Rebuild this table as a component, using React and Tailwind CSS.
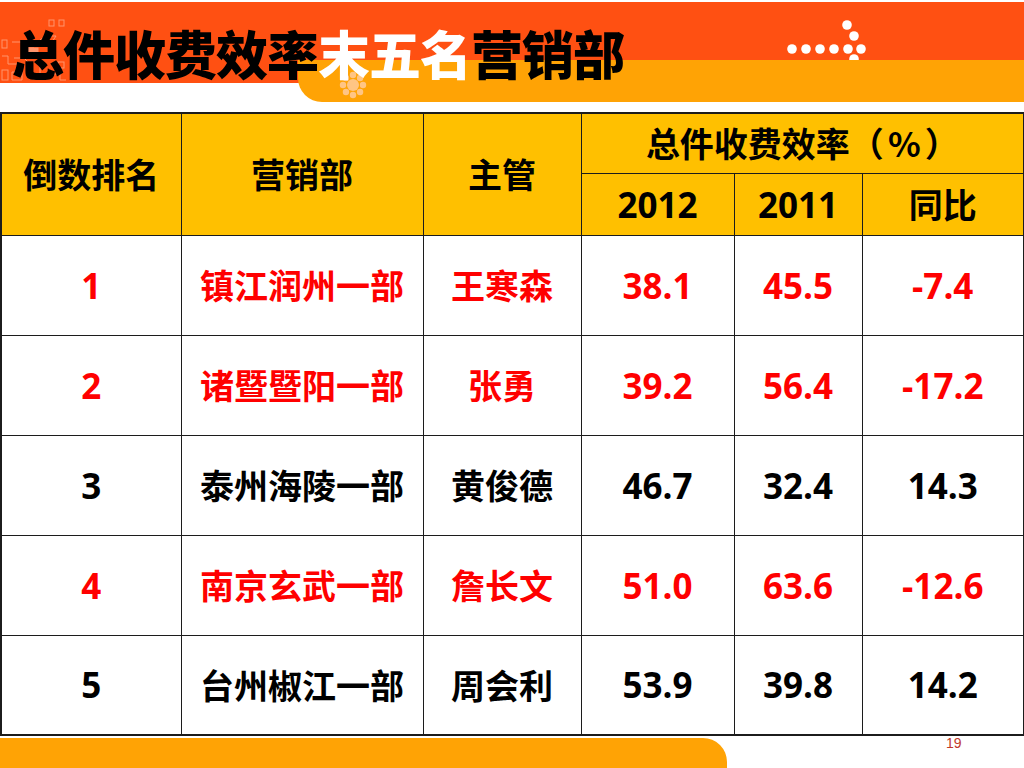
import React from 'react';

const rows = [
  { rank: '1', dept: '镇江润州一部', boss: '王寒森', y12: '38.1', y11: '45.5', diff: '-7.4', red: true },
  { rank: '2', dept: '诸暨暨阳一部', boss: '张勇', y12: '39.2', y11: '56.4', diff: '-17.2', red: true },
  { rank: '3', dept: '泰州海陵一部', boss: '黄俊德', y12: '46.7', y11: '32.4', diff: '14.3', red: false },
  { rank: '4', dept: '南京玄武一部', boss: '詹长文', y12: '51.0', y11: '63.6', diff: '-12.6', red: true },
  { rank: '5', dept: '台州椒江一部', boss: '周会利', y12: '53.9', y11: '39.8', diff: '14.2', red: false },
];

const cjk = "font-['Noto_Sans_CJK_SC',sans-serif] font-bold text-[34px]";
const num = "font-['Open_Sans','Noto_Sans_CJK_SC',sans-serif] font-bold text-[35px]";
const cell = 'border border-[#1c1c1c] text-center align-middle leading-none';

function Circuit() {
  // faint pixel/circuit pattern left of the title
  return (
    <svg className="absolute left-0 top-[18px]" width="70" height="66" viewBox="0 0 70 66" fill="none" stroke="#ffc2a8" strokeWidth="1" opacity="0.6">
      <rect x="49" y="2" width="5" height="6" />
      <rect x="59" y="2" width="5" height="6" />
      <rect x="2" y="22" width="5" height="8" />
      <path d="M12 24 h14 v6 h8" />
      <rect x="28" y="30" width="10" height="4" fill="#ffc2a8" />
      <path d="M40 22 l6 -4 h10 l-4 6" />
      <path d="M2 38 h6 v8 h10" />
      <path d="M14 40 h10 l6 6" />
      <rect x="2" y="52" width="6" height="10" />
      <path d="M12 54 h10 v8 h-10 z" />
      <path d="M26 58 h8 v4" />
      <path d="M40 48 v10 h8 v-6" />
      <path d="M52 56 h8 v6 h6" />
      <rect x="58" y="44" width="6" height="6" />
    </svg>
  );
}

function Flower() {
  const petals = [0, 1, 2, 3, 4, 5, 6, 7];
  return (
    <svg className="absolute left-[338px] top-[70px]" width="30" height="30" viewBox="0 0 30 30">
      <circle cx="15" cy="15" r="6" fill="#ffc585" />
      {petals.map((p) => {
        const a = (p * Math.PI) / 4;
        return <circle key={p} cx={15 + Math.cos(a) * 10} cy={15 + Math.sin(a) * 10} r="3.2" fill="#ffc585" />;
      })}
    </svg>
  );
}

function Dots() {
  const row = [792, 806, 820, 834, 848, 861];
  return (
    <svg className="absolute left-[780px] top-[18px]" width="90" height="42" viewBox="780 18 90 42">
      {row.map((x) => (
        <circle key={x} cx={x} cy="49" r="4.8" fill="#fff" />
      ))}
      <circle cx="847" cy="25" r="4.8" fill="#fff" />
      <circle cx="854" cy="36" r="4.8" fill="#fff" />
      <circle cx="854" cy="59" r="4.8" fill="#fff" />
    </svg>
  );
}

export default function App() {
  return (
    <div className="w-[1024px] h-[768px] bg-white overflow-hidden flex flex-col">
      {/* title banner */}
      <div className="relative h-[112px] shrink-0 pt-[2px]">
        <div className="h-[81px] bg-[#ff5012] pl-[12px] pt-[25px]">
          <h1 className="relative z-10 text-[52px] leading-none font-black tracking-[-1px] font-['Noto_Sans_CJK_SC',sans-serif] whitespace-nowrap">
            <span className="text-black">总件收费效率</span>
            <span className="text-white">末五名</span>
            <span className="text-black">营销部</span>
          </h1>
        </div>
        <Circuit />
        <Dots />
        <div className="absolute left-[298px] right-0 top-[60px] h-[42px] bg-[#ffa305] rounded-bl-[24px]" />
        <Flower />
      </div>

      {/* table */}
      <table className="table-fixed border-collapse w-[1023px] border-2 border-[#1c1c1c]">
        <colgroup>
          <col className="w-[180px]" />
          <col className="w-[242px]" />
          <col className="w-[158px]" />
          <col className="w-[153px]" />
          <col className="w-[128px]" />
          <col className="w-[162px]" />
        </colgroup>
        <thead className="bg-[#ffc000] text-black">
          <tr className="h-[60px]">
            <th rowSpan={2} className={`${cell} ${cjk}`}>倒数排名</th>
            <th rowSpan={2} className={`${cell} ${cjk}`}>营销部</th>
            <th rowSpan={2} className={`${cell} ${cjk}`}>主管</th>
            <th colSpan={3} className={`${cell} ${cjk}`}>
              总件收费效率（<span className="px-[4px]">%</span>）
            </th>
          </tr>
          <tr className="h-[62px]">
            <th className={`${cell} ${num}`}>2012</th>
            <th className={`${cell} ${num}`}>2011</th>
            <th className={`${cell} ${cjk}`}>同比</th>
          </tr>
        </thead>
        <tbody>
          {rows.map((r) => {
            const color = r.red ? 'text-[#ff0000]' : 'text-black';
            return (
              <tr key={r.rank} className={`h-[100px] ${color}`}>
                <td className={`${cell} ${num}`}>{r.rank}</td>
                <td className={`${cell} ${cjk}`}>{r.dept}</td>
                <td className={`${cell} ${cjk}`}>{r.boss}</td>
                <td className={`${cell} ${num}`}>{r.y12}</td>
                <td className={`${cell} ${num}`}>{r.y11}</td>
                <td className={`${cell} ${num}`}>{r.diff}</td>
              </tr>
            );
          })}
        </tbody>
      </table>

      {/* footer */}
      <div className="flex items-start mt-[2px]">
        <div className="w-[727px] h-[40px] bg-[#ffa305] rounded-tr-[24px]" />
        <span className="ml-[219px] -mt-[2px] text-[14px] leading-none text-[#c0392b] font-['Liberation_Sans',sans-serif]">19</span>
      </div>
    </div>
  );
}
